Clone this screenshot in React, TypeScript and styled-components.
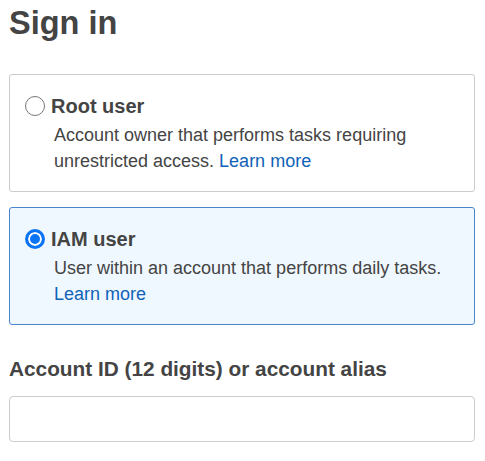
import React, { useState } from 'react';
import styled, { createGlobalStyle } from 'styled-components';

const GlobalStyle = createGlobalStyle`
  body {
    margin : 0;
    background : #fff;
    font-family : "Liberation Sans", Arial, sans-serif;
    color : #444;
  }
`

const B_Page = styled.div`
  width : 466px;
  padding : 3px 0 0 9px;
`

const B_Title = styled.h1`
  margin : 0;
  font-size : 32.5px;
  line-height : 40px;
  font-weight : 700;
  color : #444;
`

const B_TileList = styled.div`
  display : flex;
  flex-direction : column;
  gap : 15px;
  margin-top : 31px;
`

const B_Tile = styled.label<{ $active : boolean }>`
  display : block;
  padding : 16px 15px 17px 15px;
  border : 1px solid ${(p) => (p.$active ? '#4a84cc' : '#cccccc')};
  border-radius : 3px;
  background : ${(p) => (p.$active ? '#f0f8ff' : '#ffffff')};
  cursor : pointer;
`

const B_TileHead = styled.div`
  display : flex;
  align-items : center;
  gap : 6px;
  height : 30px;
`

// 라디오 버튼 (크롬 기본 모양 흉내)
const B_Radio = styled.span<{ $checked : boolean }>`
  box-sizing : border-box;
  width : 20px;
  height : 20px;
  border-radius : 50%;
  flex-shrink : 0;
  border : ${(p) => (p.$checked ? '3px solid #0b74f4' : '1.5px solid #767676')};
  background : ${(p) => (p.$checked ? '#0b74f4' : '#fff')};
  box-shadow : ${(p) => (p.$checked ? 'inset 0 0 0 2px #fff' : 'none')};
`

const B_TileName = styled.span`
  font-size : 20px;
  font-weight : 700;
  color : #444;
`

const B_TileDesc = styled.p`
  margin : 1px 0 0 0;
  padding-left : 29px;
  font-size : 18px;
  line-height : 26px;
  color : #444;
`

const B_Link = styled.a`
  color : #1062b8;
  text-decoration : none;
`

const B_FieldLabel = styled.label`
  display : block;
  margin-top : 31px;
  font-size : 20.8px;
  line-height : 26px;
  font-weight : 700;
  color : #444;
`

const B_Input = styled.input`
  display : block;
  box-sizing : border-box;
  width : 100%;
  height : 46px;
  margin-top : 14px;
  padding : 0 12px;
  border : 1px solid #cccccc;
  border-radius : 4px;
  font-size : 18px;
  font-family : inherit;
  outline : none;
`

const tiles = [
  {
    key : 'root',
    name : 'Root user',
    desc : 'Account owner that performs tasks requiring unrestricted access.',
  },
  {
    key : 'iam',
    name : 'IAM user',
    desc : 'User within an account that performs daily tasks.',
  },
]

const App = () => {
  const [userType, setUserType] = useState('iam');

  return (
    <>
      <GlobalStyle />
      <B_Page>
        <B_Title>Sign in</B_Title>
        <B_TileList>
          {tiles.map((t) => (
            <B_Tile key={t.key} $active={userType === t.key} onClick={() => setUserType(t.key)}>
              <B_TileHead>
                <B_Radio $checked={userType === t.key} />
                <B_TileName>{t.name}</B_TileName>
              </B_TileHead>
              <B_TileDesc>
                {t.desc} <B_Link href="#">Learn more</B_Link>
              </B_TileDesc>
            </B_Tile>
          ))}
        </B_TileList>
        <B_FieldLabel htmlFor="account">Account ID (12 digits) or account alias</B_FieldLabel>
        <B_Input id="account" type="text" />
      </B_Page>
    </>
  )
}

export default App;
